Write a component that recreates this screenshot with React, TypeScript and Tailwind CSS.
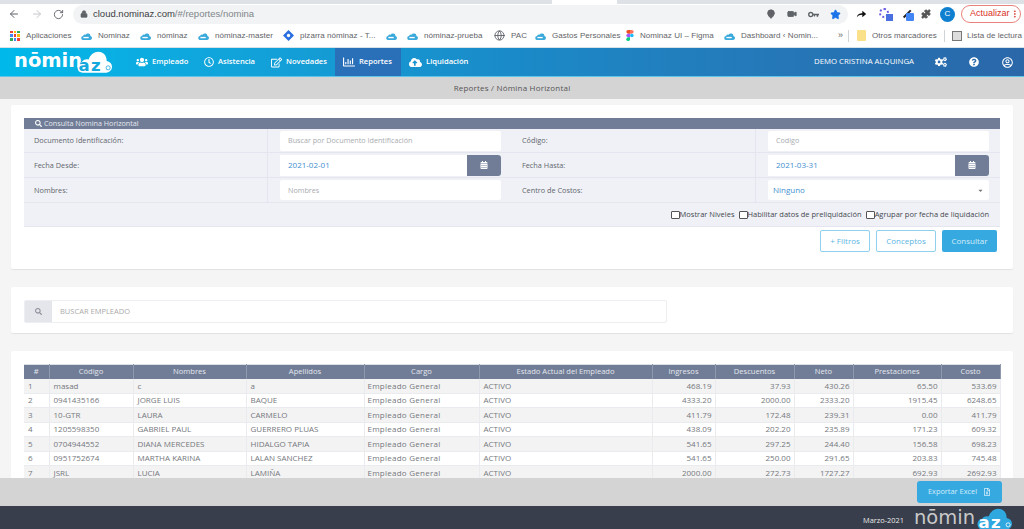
import { ArrowLeft, ArrowRight, RotateCw, Lock, MapPin, Video, Star, Puzzle, Globe, MoreVertical } from "lucide-react";
import {
  FaUsers, FaRegClock, FaRegEdit, FaRegChartBar, FaCloudUploadAlt, FaCogs, FaQuestionCircle,
  FaRegUserCircle, FaSearch, FaCalendarAlt, FaRegFileExcel, FaCaretDown,
} from "react-icons/fa";

const Fav = () => (
  <svg viewBox="0 0 12 9" className="h-[8px] w-[11px] shrink-0">
    <path d="M2.5 9a2.2 2.2 0 0 1-.4-4.4A2.6 2.6 0 0 1 5 3 3 3 0 0 1 10.500 4.500 2.300 2.300 0 0 1 10 9z" fill="#3aa9dc" />
    <rect x="2.500" y="5.500" width="6" height="1.500" fill="#fff" />
  </svg>
);

const AppsIcon = () => (
  <div className="grid h-[10px] w-[10px] shrink-0 grid-cols-3 gap-[1px]">
    <i className="bg-[#ea4335]" /><i className="bg-[#fbbc05]" /><i className="bg-[#34a853]" />
    <i className="bg-[#4285f4]" /><i className="bg-[#ea4335]" /><i className="bg-[#fbbc05]" />
    <i className="bg-[#34a853]" /><i className="bg-[#4285f4]" /><i className="bg-[#ea4335]" />
  </div>
);

const Diamond = () => (
  <svg viewBox="0 0 12 12" className="h-[11px] w-[11px] shrink-0">
    <path d="M6 0l6 6-6 6-6-6z" fill="#2a6fe0" />
    <circle cx="6" cy="6" r="1.800" fill="#fff" />
  </svg>
);

const Figma = () => (
  <svg viewBox="0 0 8 12" className="h-[11px] w-[8px] shrink-0">
    <path d="M0 2a2 2 0 0 1 2-2h2v4H2a2 2 0 0 1-2-2z" fill="#f24e1e" />
    <path d="M4 0h2a2 2 0 0 1 0 4H4z" fill="#ff7262" />
    <path d="M0 6a2 2 0 0 1 2-2h2v4H2a2 2 0 0 1-2-2z" fill="#a259ff" />
    <circle cx="6" cy="6" r="2" fill="#1abcfe" />
    <path d="M0 10a2 2 0 0 1 2-2h2v2a2 2 0 0 1-4 0z" fill="#0acf83" />
  </svg>
);

const Key = () => (
  <svg viewBox="0 0 14 8" className="ml-[11px] h-[7px] w-[11px]">
    <circle cx="3.500" cy="4" r="2.600" fill="none" stroke="#5f6368" strokeWidth="1.700" />
    <path d="M6 3h8v2h-1v2h-2V5H9v1.500H7.500V5H6z" fill="#5f6368" />
  </svg>
);

const bookmarks = [
  { label: "Aplicaciones", icon: <AppsIcon />, box: "w-[81px] pl-[10px]" },
  { label: "Nominaz", icon: <Fav />, box: "w-[59px]" },
  { label: "nóminaz", icon: <Fav />, box: "w-[58px]" },
  { label: "nóminaz-master", icon: <Fav />, box: "w-[85px]" },
  { label: "pizarra nóminaz - T...", icon: <Diamond />, box: "w-[103px]" },
  { label: "", icon: <Fav />, box: "w-[21px]" },
  { label: "nóminaz-prueba", icon: <Fav />, box: "w-[87px]" },
  { label: "PAC", icon: <Globe className="h-[11px] w-[11px] text-[#5f6368]" />, box: "w-[41px]" },
  { label: "Gastos Personales", icon: <Fav />, box: "w-[91px]" },
  { label: "Nominaz UI – Figma", icon: <Figma />, box: "w-[98px]" },
  { label: "Dashboard ‹ Nomin...", icon: <Fav />, box: "w-[114px]" },
];

const navItems = [
  { label: "Empleado", icon: <FaUsers className="text-[12px]" />, box: "w-[68px] pl-[8px]" },
  { label: "Asistencia", icon: <FaRegClock className="text-[10px]" />, box: "w-[67px] pl-[8px]" },
  { label: "Novedades", icon: <FaRegEdit className="text-[11px]" />, box: "w-[72px] pl-[8px]" },
  { label: "Reportes", icon: <FaRegChartBar className="text-[12px]" />, box: "w-[66px] pl-[8px] bg-[#2a70b9]" },
  { label: "Liquidación", icon: <FaCloudUploadAlt className="text-[13px]" />, box: "w-[76px] pl-[8px]" },
];

const Logo = ({ text, cloud, az }: { text: string; cloud: string; az: string }) => (
  <div className="relative h-[22px] w-[97px] shrink-0">
    <span className={"absolute left-[-1px] top-[-2px] text-[19.5px] leading-[24px] font-['DejaVu_Sans'] " + text}>nōmin</span>
    <svg viewBox="0 0 36 22" className="absolute right-0 top-0 h-[22px] w-[35px]">
      <path d="M6 22a5.500 5.500 0 0 1-1-10.900C7 8 10 8 12 8.500 14 2 20 -1 25 1c4 1.500 5.500 5 5.500 9 3.500.5 5.500 3 5.500 6s-2.500 6-6 6z" fill={cloud} />
      <text x="1.500" y="20" fontSize="17" fontWeight="700" letterSpacing="1.500" fontFamily="DejaVu Sans, sans-serif" fill={az}>az</text>
      <circle cx="32" cy="17" r="2.100" fill="none" stroke={az} strokeWidth="0.800" />
    </svg>
  </div>
);

const FieldLabel = ({ children }: { children: string }) => (
  <div className="flex w-[244px] items-center border-r border-[#e3e6ee] pl-[10px] text-[7.3px] text-[#62656c]">{children}</div>
);

const InputCell = ({ children }: { children: React.ReactNode }) => (
  <div className="flex w-[244px] items-center pl-[12px] pr-[11px]">{children}</div>
);

const TextBox = ({ placeholder }: { placeholder: string }) => (
  <div className="flex h-[20px] w-full items-center rounded-[2px] bg-white pl-[8px] text-[7.2px] text-[#a9abb0]">{placeholder}</div>
);

const DateBox = ({ value }: { value: string }) => (
  <div className="flex h-[21px] w-full">
    <div className="flex flex-1 items-center bg-white pl-[8px] text-[#3f8fd2]">{value}</div>
    <div className="flex w-[34px] items-center justify-center rounded-r-[3px] bg-[#717d97] text-white">
      <FaCalendarAlt className="text-[8px]" />
    </div>
  </div>
);

const Check = ({ label }: { label: string }) => (
  <span className="flex items-center">
    <i className="h-[8px] w-[9px] rounded-[1px] border border-[#555] bg-white" />
    <span>{label}</span>
  </span>
);

const rows = [
  ["1", "masad", "c", "a", "468.19", "37.93", "430.26", "65.50", "533.69"],
  ["2", "0941435166", "JORGE LUIS", "BAQUE", "4333.20", "2000.00", "2333.20", "1915.45", "6248.65"],
  ["3", "10-GTR", "LAURA", "CARMELO", "411.79", "172.48", "239.31", "0.00", "411.79"],
  ["4", "1205598350", "GABRIEL PAUL", "GUERRERO PLUAS", "438.09", "202.20", "235.89", "171.23", "609.32"],
  ["5", "0704944552", "DIANA MERCEDES", "HIDALGO TAPIA", "541.65", "297.25", "244.40", "156.58", "698.23"],
  ["6", "0951752674", "MARTHA KARINA", "LALAN SANCHEZ", "541.65", "250.00", "291.65", "203.83", "745.48"],
  ["7", "JSRL", "LUCIA", "LAMIÑA", "2000.00", "272.73", "1727.27", "692.93", "2692.93"],
];

const heads = ["#", "Código", "Nombres", "Apellidos", "Cargo", "Estado Actual del Empleado", "Ingresos", "Descuentos", "Neto", "Prestaciones", "Costo"];
const colWidths = ["w-[25px]", "w-[84px]", "w-[113px]", "w-[118px]", "w-[115px]", "w-[173px]", "w-[63px]", "w-[79px]", "w-[59px]", "w-[88px]", "w-[59px]"];

export default function App() {
  return (
    <div className="flex h-screen w-full flex-col overflow-hidden bg-[#f5f5f5] font-['Open_Sans',sans-serif] text-[8px]">
      {/* browser chrome */}
      <div className="flex h-[4px] shrink-0 bg-[#dee1e6]">
        <div className="ml-[552px] w-[65px] bg-white" />
      </div>
      <div className="flex h-[20px] shrink-0 items-center bg-white font-['Liberation_Sans',sans-serif] text-[#5f6368]">
        <ArrowLeft className="ml-[8px] h-[12px] w-[12px]" />
        <ArrowRight className="ml-[11px] h-[12px] w-[12px] text-[#c4c7cb]" />
        <RotateCw className="ml-[10px] h-[11px] w-[11px]" />
        <div className="ml-[9px] flex h-[19px] w-[775px] items-center rounded-full bg-[#f1f3f4]">
          <Lock className="ml-[7px] h-[8px] w-[8px] fill-[#5f6368]" />
          <span className="ml-[5px] text-[9.5px]">
            <span className="text-[#3c4043]">cloud.nominaz.com</span><span className="text-[#80868b]">/#/reportes/nomina</span>
          </span>
          <MapPin className="ml-auto h-[10px] w-[10px] fill-[#5f6368] text-[#5f6368]" />
          <Video className="ml-[11px] h-[10px] w-[10px] fill-[#5f6368]" />
          <Key />
          <Star className="ml-[11px] mr-[7px] h-[11px] w-[11px] fill-[#1a73e8] text-[#1a73e8]" />
        </div>
        <svg viewBox="0 0 14 10" className="ml-[8px] h-[8px] w-[11px]"><path d="M1 9c1-4 4-5 7-5V1l5 4-5 4V6C5 6 3 7 1 9z" fill="#111" /></svg>
        <div className="relative ml-[12px] h-[13px] w-[14px]">
          <div className="h-[10px] w-[10px] rounded-full border-2 border-dotted border-[#6a5be2]" />
          <div className="absolute bottom-0 right-0 h-[7px] w-[7px] bg-[#4a6fe0]" />
        </div>
        <div className="relative ml-[8px] h-[13px] w-[13px]">
          <div className="absolute left-[1px] top-[5px] h-[1.500px] w-[10px] -rotate-45 bg-[#222]" />
          <div className="absolute bottom-0 right-0 h-[8px] w-[8px] rounded-[1px] bg-[#4285f4]" />
        </div>
        <Puzzle className="ml-[7px] h-[10px] w-[10px] fill-[#555] text-[#555]" />
        <div className="ml-[9px] flex h-[15px] w-[15px] items-center justify-center rounded-full bg-[#0f7fd0] text-[8px] text-white">C</div>
        <div className="ml-[6px] flex h-[18px] w-[60px] items-center rounded-full border border-[#e8837b] pl-[8px] text-[9px] text-[#d93025]">
          Actualizar
          <MoreVertical className="ml-auto mr-[1px] h-[10px] w-[10px]" />
        </div>
      </div>
      <div className="flex h-[23px] shrink-0 items-center bg-white font-['Liberation_Sans',sans-serif] text-[8px] tracking-[0.05px] text-[#5f6368]">
        {bookmarks.map((b, i) => (
          <div key={i} className={"flex shrink-0 items-center gap-[6px] " + b.box}>
            {b.icon}
            {b.label && <span className="whitespace-nowrap">{b.label}</span>}
          </div>
        ))}
        <span className="w-[10px] text-[9px]">»</span>
        <i className="h-[12px] w-px bg-[#d0d3d7]" />
        <div className="ml-[8px] h-[11px] w-[9px] shrink-0 rounded-[1px] bg-[#fbe08a]" />
        <span className="ml-[6px] w-[72px] whitespace-nowrap">Otros marcadores</span>
        <i className="h-[12px] w-px bg-[#d0d3d7]" />
        <div className="ml-[7px] h-[10px] w-[10px] shrink-0 border border-[#777] bg-[#ddd]" />
        <span className="ml-[5px] whitespace-nowrap">Lista de lectura</span>
      </div>

      {/* app nav */}
      <div className="flex h-[30px] shrink-0 items-stretch border-b border-b-[#5fc4ea] border-t border-t-[#d6e4ea] bg-gradient-to-r from-[#00b9ea] via-[#1a8ac8] to-[#2a67a9] pl-[15px] text-[7.6px] font-semibold text-white">
        <div className="flex items-center"><Logo text="text-white" cloud="#ffffff" az="#12a8dc" /></div>
        <div className="ml-[16px] flex">
          {navItems.map((n) => (
            <div key={n.label} className={"flex items-center gap-[4px] " + n.box}>
              {n.icon}
              <span className="whitespace-nowrap">{n.label}</span>
            </div>
          ))}
        </div>
        <div className="ml-auto flex items-center pr-[11px]">
          <span className="text-[7.8px] font-normal">DEMO CRISTINA ALQUINGA</span>
          <FaCogs className="ml-[21px] text-[12px]" />
          <FaQuestionCircle className="ml-[22px] text-[10px]" />
          <FaRegUserCircle className="ml-[23px] text-[11px]" />
        </div>
      </div>
      <div className="flex h-[22px] shrink-0 items-center justify-center bg-[#d4d4d4] tracking-[0.2px] text-[#555]">
        Reportes / Nómina Horizontal
      </div>

      {/* content */}
      <div className="min-h-0 flex-1 overflow-hidden px-[11px] pt-[6px]">
        <div className="h-[164px] rounded-[2px] bg-white px-[13px] pt-[13px] shadow-[0_1px_1px_rgba(0,0,0,0.08)]">
          <div className="flex h-[11px] items-center gap-[2px] bg-[#717d97] pl-[11px] text-[7.2px] text-[#e4e7ee]">
            <FaSearch className="text-[7px] text-white" /> Consulta Nomina Horizontal
          </div>
          <div className="bg-[#eff1f6]">
            <div className="flex h-[24px] border-b border-[#e3e6ee]">
              <FieldLabel>Documento Identificación:</FieldLabel>
              <InputCell><TextBox placeholder="Buscar por Documento Identificación" /></InputCell>
              <FieldLabel>Código:</FieldLabel>
              <InputCell><TextBox placeholder="Codigo" /></InputCell>
            </div>
            <div className="flex h-[25px] border-b border-[#e3e6ee]">
              <FieldLabel>Fecha Desde:</FieldLabel>
              <InputCell><DateBox value="2021-02-01" /></InputCell>
              <FieldLabel>Fecha Hasta:</FieldLabel>
              <InputCell><DateBox value="2021-03-31" /></InputCell>
            </div>
            <div className="flex h-[25px] border-b border-[#e3e6ee]">
              <FieldLabel>Nombres:</FieldLabel>
              <InputCell><TextBox placeholder="Nombres" /></InputCell>
              <FieldLabel>Centro de Costos:</FieldLabel>
              <InputCell>
                <div className="flex h-[20px] w-full items-center rounded-[2px] bg-white pl-[5px] pr-[5px] text-[#3f8fd2]">
                  Ninguno
                  <FaCaretDown className="ml-auto text-[7px] text-[#777]" />
                </div>
              </InputCell>
            </div>
            <div className="flex h-[24px] items-center justify-end gap-[4px] border-b border-[#e3e6ee] pr-[11px] pt-[1px] text-[7.5px] text-[#45484f]">
              <Check label="Mostrar Niveles" />
              <Check label="Habilitar datos de preliquidación" />
              <Check label="Agrupar por fecha de liquidación" />
            </div>
          </div>
          <div className="mt-[3px] flex justify-end gap-[6px] pr-[3px]">
            <button className="h-[22px] w-[50px] rounded-[2px] border border-[#8fd0ef] text-[#5ab4e3]">+ Filtros</button>
            <button className="h-[22px] w-[60px] rounded-[2px] border border-[#8fd0ef] text-[#5ab4e3]">Conceptos</button>
            <button className="h-[22px] w-[55px] rounded-[2px] bg-[#36a9e1] text-[#d4edfa]">Consultar</button>
          </div>
        </div>

        <div className="mt-[18px] h-[46px] rounded-[2px] bg-white pl-[13px] pt-[13px] shadow-[0_1px_1px_rgba(0,0,0,0.08)]">
          <div className="flex h-[23px] w-[643px] rounded-[2px] border border-[#eceef2]">
            <div className="flex w-[27px] items-center justify-center bg-[#e4e6ec] text-[#8b8f98]">
              <FaSearch className="text-[7px]" />
            </div>
            <div className="flex flex-1 items-center pl-[8px] text-[7.5px] text-[#aaa]">BUSCAR EMPLEADO</div>
          </div>
        </div>

        <div className="mt-[18px] rounded-[2px] bg-white px-[13px] pt-[13px]">
          <table className="w-[976px] table-fixed border-collapse text-[#75787e]">
            <thead>
              <tr className="h-[14px] border-t border-[#dcdfe6] bg-[#717d97] text-[7.6px] text-[#e4e7ee]">
                {heads.map((h, i) => (
                  <th key={h} className={"border-r border-[#8f99ae] p-0 pb-[1px] text-center font-normal " + colWidths[i]}>{h}</th>
                ))}
              </tr>
            </thead>
            <tbody>
              {rows.map((r, i) => (
                <tr key={r[0]} className={"h-[14.5px] border-b border-[#e9ebef] " + (i % 2 === 0 ? "bg-[#f3f3f3]" : "bg-white")}>
                  <td className="border-r border-[#e9ebef] p-0 pl-[4px]">{r[0]}</td>
                  <td className="border-r border-[#e9ebef] p-0 pl-[4px]">{r[1]}</td>
                  <td className="border-r border-[#e9ebef] p-0 pl-[4px]">{r[2]}</td>
                  <td className="border-r border-[#e9ebef] p-0 pl-[4px]">{r[3]}</td>
                  <td className="border-r border-[#e9ebef] p-0 pl-[3px] tracking-[0.25px]">Empleado General</td>
                  <td className="border-r border-[#e9ebef] p-0 pl-[4px]">ACTIVO</td>
                  {r.slice(4).map((v, j) => (
                    <td key={j} className="border-r border-[#e9ebef] p-0 pr-[3px] text-right">{v}</td>
                  ))}
                </tr>
              ))}
            </tbody>
          </table>
        </div>
      </div>

      {/* bottom */}
      <div className="flex h-[28px] shrink-0 items-center justify-end bg-[#d4d4d4] pr-[22px]">
        <button className="flex h-[22px] w-[85px] items-center justify-center gap-[6px] rounded-[3px] bg-[#36a9e1] text-[7.4px] text-[#d4edfa]">
          Exportar Excel <FaRegFileExcel className="text-[8px]" />
        </button>
      </div>
      <div className="flex h-[23px] shrink-0 items-start justify-end overflow-hidden bg-[#383e4b] pr-[12px] pt-[2px] text-[7.4px] text-[#e8e8e8]">
        <span className="mt-[7px]">Marzo-2021</span>
        <div className="ml-[11px]"><Logo text="text-[#c9c9c9]" cloud="#2fa8e0" az="#ffffff" /></div>
      </div>
    </div>
  );
}
